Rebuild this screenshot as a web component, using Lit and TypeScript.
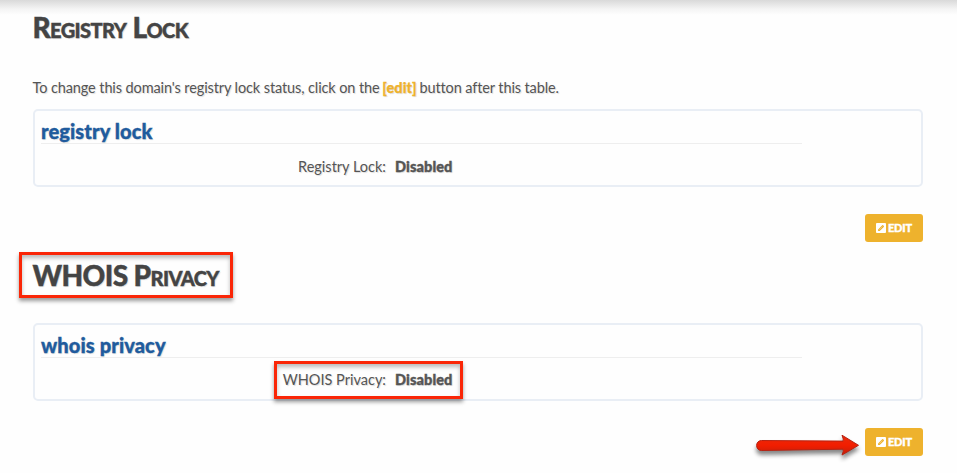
import { LitElement, html, css, nothing } from "lit";
import { customElement, property } from "lit/decorators.js";

@customElement("edit-button")
class EditButton extends LitElement {
  static styles = css`
    :host { display: block; }
    .button { display: flex; align-items: center; box-sizing: border-box; width: 58px; height: 28px; padding: 0 0 0 11px; gap: 2px; border: 0; border-radius: 3px; background: #eeb22d; color: #fff; font: 900 11px/28px Lato, sans-serif; letter-spacing: -0.2px; -webkit-text-stroke: 0.4px #fff; cursor: pointer; }
    .icon { display: block; flex: none; width: 10px; height: 10px; }
  `;
  render() {
    return html`<button class="button">
      <svg class="icon" viewBox="0 0 10 10"><rect width="10" height="10" rx=".9" fill="#fff"/><path d="M2.1 8V6.4L6.2 2.3Q6.7 1.8 7.2 2.3L7.8 2.9Q8.2 3.4 7.8 3.9L3.7 8Z" fill="#eeb22d"/><path d="M3.4 6.6L6.5 3.5" stroke="#fff" stroke-width=".35"/></svg>
      <span>EDIT</span>
    </button>`;
  }
}

@customElement("domain-panel")
class DomainPanel extends LitElement {
  @property() name = "";
  @property() label = "";
  @property() value = "";
  @property({ type: Boolean }) marked = false;
  static styles = css`
    :host { display: block; }
    .panel { box-sizing: border-box; height: 78px; border: 2px solid #e9eef5; border-radius: 5px; padding: 7px 6px 0; }
    .name { box-sizing: border-box; width: 761px; height: 26px; margin: 0; border-bottom: 1px solid #eee; color: #205b9d; font: 900 20px/26px Lato, sans-serif; letter-spacing: 0.13px; -webkit-text-stroke: 0.35px #205b9d; text-shadow: 1px 1px 1px #0002; }
    .title { display: inline-block; white-space: nowrap; }
    .row { display: grid; grid-template-columns: 345px auto; column-gap: 9px; padding-top: 13px; font: 14.5px/20px Lato, sans-serif; position: relative; }
    :host([marked]) .row { padding-top: 12px; }
    .label { text-align: right; white-space: nowrap; }
    .value { font-weight: 900; letter-spacing: 0.12px; -webkit-text-stroke: 0.35px #555; }
    .mark { position: absolute; left: 233px; top: 3px; box-sizing: border-box; width: 189px; height: 38px; border: 3px solid #fa2607; box-shadow: 0 3px 4px #0006, inset 0 3px 4px #0004; }
  `;
  render() {
    return html`<section class="panel">
      <h2 class="name"><span class="title">${this.name}</span></h2>
      <div class="row"><span class="label">${this.label}</span><span class="value">${this.value}</span>
      ${this.marked ? html`<div class="mark"></div>` : nothing}</div>
    </section>`;
  }
}

@customElement("app-root")
class AppRoot extends LitElement {
  static styles = css`
    :host { display: block; box-sizing: border-box; height: 473px; overflow: hidden; position: relative; padding: 11px 34px 0 33px; background: linear-gradient(#d9d9d9 0, #e5e5e5 4px, #f4f4f4 9px, #fefefe 15px, #fefefe); color: #555; font: 15px/20px Lato, sans-serif; text-shadow: 1px 1px 1px #0002; }
    .heading { width: max-content; height: 34px; margin: 0 0 0 -0.5px; color: #444; font: 900 28px/33px Lato, sans-serif; font-variant: small-caps; letter-spacing: -0.58px; -webkit-text-stroke: 0.4px #444; text-shadow: 1px 1px 1px #0002; position: relative; }
    .intro { margin: 33px 0 11px -0.5px; font-size: 14.5px; letter-spacing: -0.105px; white-space: nowrap; }
    .intro strong { margin: 0 -1px 0 -1px; letter-spacing: 0.1px; color: #eeb22d; font-weight: 900; -webkit-text-stroke: 0.25px #eeb22d; }
    .actions { display: flex; justify-content: flex-end; padding-top: 27px; }
    .privacy { margin-top: 17px; }
    .privacy domain-panel { margin-top: 30px; }
    .mark { position: absolute; left: -13.5px; top: -7px; width: 214px; height: 46px; box-sizing: border-box; border: 3px solid #fa2607; box-shadow: 0 3px 4px #0006, inset 0 3px 4px #0004; }
    .arrow { position: absolute; left: 750px; top: 428px; width: 115px; height: 38px; filter: drop-shadow(0 4px 2px #0007); }
  `;
  render() {
    return html`
      <section>
        <h1 class="heading">Registry Lock</h1>
        <p class="intro">To change this domain's registry lock status, click on the <strong>[edit]</strong> button after this table.</p>
        <domain-panel name="registry lock" label="Registry Lock:" value="Disabled"></domain-panel>
        <div class="actions"><edit-button></edit-button></div>
      </section>
      <section class="privacy">
        <h1 class="heading">WHOIS Privacy<span class="mark"></span></h1>
        <domain-panel name="whois privacy" label="WHOIS Privacy:" value="Disabled" marked></domain-panel>
        <div class="actions"><edit-button></edit-button></div>
      </section>
      <svg class="arrow" viewBox="0 0 115 38"><defs><linearGradient id="red" x1="0" y1="0" x2="0" y2="1"><stop stop-color="#e92b0b"/><stop offset=".5" stop-color="#f21e00"/><stop offset="1" stop-color="#c51e09"/></linearGradient></defs><path d="M11.5 12.5L93 13.1Q94 12 92 7.2L108.5 17.3L92 27Q94 22.5 93 21.2L11.5 22.5C5 22.5 5 12.5 11.5 12.5Z" fill="url(#red)" stroke="#b52212" stroke-width="1" stroke-linejoin="round"/></svg>`;
  }
}
